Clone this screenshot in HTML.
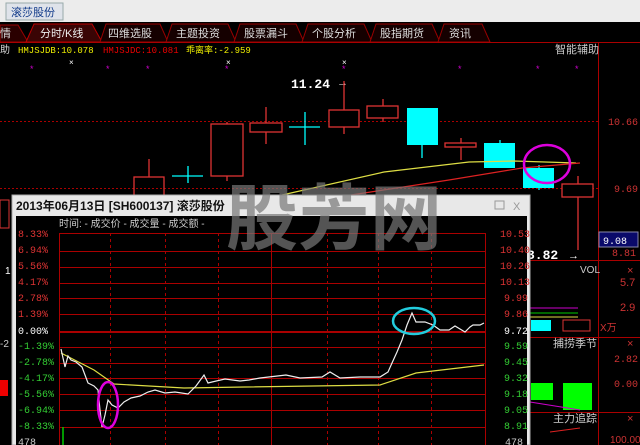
<!DOCTYPE html>
<html><head><meta charset="utf-8"><style>
body{margin:0;width:640px;height:445px;overflow:hidden;background:#000;font-family:"Liberation Sans","Noto Sans CJK SC",sans-serif}
svg{display:block}
</style></head><body>
<svg width="640" height="445" viewBox="0 0 640 445" xmlns="http://www.w3.org/2000/svg" font-family="Liberation Sans, Noto Sans CJK SC, sans-serif">
<rect width="640" height="445" fill="#000"/>
<rect width="640" height="22" fill="#ececec"/>
<rect x="6" y="3" width="57" height="17" fill="#dfe3ea" stroke="#9aa" />
<text x="11" y="16" font-size="11" fill="#113a8a">滚莎股份</text>
<g font-size="11" fill="#ddd">
<path d="M0 42 L0 25 L18 25 L28 42Z" fill="#2a0000" stroke="#900"/>
<text x="0" y="37">情</text>
<path d="M26 42 L34 24 L92 24 L102 42Z" fill="#3a0505" stroke="#b00"/>
<text x="40" y="37" fill="#eee">分时/K线</text>
<path d="M100 42 L106 24 L160 24 L168 42Z" fill="#150000" stroke="#900"/><text x="108" y="37">四维选股</text>
<path d="M166 42 L172 24 L228 24 L236 42Z" fill="#150000" stroke="#900"/><text x="176" y="37">主题投资</text>
<path d="M234 42 L240 24 L296 24 L304 42Z" fill="#150000" stroke="#900"/><text x="244" y="37">股票漏斗</text>
<path d="M302 42 L308 24 L364 24 L372 42Z" fill="#150000" stroke="#900"/><text x="312" y="37">个股分析</text>
<path d="M370 42 L376 24 L432 24 L440 42Z" fill="#150000" stroke="#900"/><text x="380" y="37">股指期货</text>
<path d="M438 42 L444 24 L482 24 L490 42Z" fill="#150000" stroke="#900"/><text x="449" y="37">资讯</text>
</g>
<line x1="0" y1="42.5" x2="640" y2="42.5" stroke="#a00"/>
<line x1="598.5" y1="42" x2="598.5" y2="445" stroke="#a00"/>
<g font-size="9" font-family="Liberation Mono, Noto Sans CJK SC, monospace">
<text x="0" y="53" fill="#ddd" font-size="10">助</text>
<text x="18" y="53" fill="#ee0">HMJSJDB:10.078</text>
<text x="103" y="53" fill="#e00">HMJSJDC:10.081</text>
<text x="186" y="53" fill="#ee0">乖离率:-2.959</text>
<text x="555" y="53" fill="#ccc" font-family="Liberation Sans, Noto Sans CJK SC, sans-serif" font-size="11">智能辅助</text>
</g>
<g fill="#c0c" font-size="9">
<text x="30" y="72">*</text><text x="106" y="72">*</text><text x="146" y="72">*</text><text x="225" y="72">*</text><text x="342" y="72">*</text><text x="458" y="72">*</text><text x="536" y="72">*</text><text x="575" y="72">*</text>
</g>
<g fill="#fff" font-size="8"><text x="69" y="65">×</text><text x="226" y="65">×</text><text x="342" y="65">×</text></g>
<text x="291" y="88" fill="#fff" font-size="13" font-weight="bold" font-family="Liberation Mono, monospace">11.24</text>
<text x="337" y="86" fill="#fff" font-size="11">→</text>
<line x1="0" y1="121.5" x2="598" y2="121.5" stroke="#a00" stroke-dasharray="2,2"/>
<text x="608" y="125" fill="#c33" font-size="10" font-family="Liberation Mono, monospace">10.66</text>
<text x="614" y="192" fill="#c33" font-size="10" font-family="Liberation Mono, monospace">9.69</text>
<line x1="0" y1="188.5" x2="598" y2="188.5" stroke="#a00" stroke-dasharray="2,2"/>
<g stroke="#d33" fill="none" stroke-width="1.3">
<line x1="149" y1="159" x2="149" y2="177"/><rect x="134" y="177" width="30" height="30"/>
<line x1="227" y1="122" x2="227" y2="181"/><rect x="211" y="124" width="32" height="52" fill="#000"/>
<line x1="266" y1="107" x2="266" y2="144"/><rect x="250" y="123" width="32" height="9" fill="#000"/>
<line x1="344" y1="81" x2="344" y2="134"/><rect x="329" y="110" width="30" height="17" fill="#000"/>
<line x1="383" y1="99" x2="383" y2="122"/><rect x="367" y="106" width="31" height="12" fill="#000"/>
<line x1="461" y1="138" x2="461" y2="160"/><rect x="445" y="143" width="31" height="4" fill="#000"/>
<line x1="578" y1="176" x2="578" y2="250"/><rect x="562" y="184" width="31" height="13" fill="#000"/>
</g>
<g stroke="#0ff" stroke-width="1.3">
<line x1="172" y1="176" x2="203" y2="176"/><line x1="188" y1="166" x2="188" y2="183"/>
<line x1="289" y1="127" x2="320" y2="127"/><line x1="305" y1="112" x2="305" y2="145"/>
<line x1="422" y1="145" x2="422" y2="158"/><line x1="500" y1="140" x2="500" y2="143"/><line x1="539" y1="165" x2="539" y2="190"/>
</g>
<rect x="407" y="108" width="31" height="37" fill="#0ff"/>
<rect x="484" y="143" width="31" height="25" fill="#0ff"/>
<rect x="523" y="168" width="31" height="20" fill="#0ff"/>
<polyline points="282,195 384,172 469,162 514,161 576,163" fill="none" stroke="#dd4" stroke-width="1.2"/>
<polyline points="351,195 449,180 522,168 580,163" fill="none" stroke="#d22" stroke-width="1.2"/>
<ellipse cx="547" cy="164" rx="23" ry="19" fill="none" stroke="#d0d" stroke-width="2.5"/>
<rect x="599" y="232" width="39" height="15" fill="#0a0a6a" stroke="#88a"/>
<text x="603" y="244" fill="#fff" font-size="10" font-family="Liberation Mono, monospace">9.08</text>
<text x="612" y="256" fill="#c33" font-size="10" font-family="Liberation Mono, monospace">8.81</text>
<line x1="530" y1="260.5" x2="640" y2="260.5" stroke="#a00"/>
<text x="527" y="259" fill="#fff" font-size="13" font-weight="bold" font-family="Liberation Mono, monospace">3.82</text>
<text x="568" y="259" fill="#fff" font-size="11">→</text>
<text x="580" y="273" fill="#ccc" font-size="10">VOL</text>
<text x="627" y="274" fill="#c33" font-size="11">×</text>
<text x="620" y="286" fill="#c33" font-size="11">5.7</text>
<text x="620" y="311" fill="#c33" font-size="11">2.9</text>
<line x1="530" y1="308" x2="578" y2="308" stroke="#c0c"/><line x1="530" y1="313" x2="578" y2="313" stroke="#0c0"/><line x1="530" y1="317" x2="578" y2="317" stroke="#dd4"/>
<rect x="531" y="320" width="20" height="11" fill="#0ff"/>
<rect x="563" y="320" width="27" height="11" fill="none" stroke="#d33"/>
<text x="600" y="331" fill="#c33" font-size="10">X万</text>
<line x1="530" y1="337.5" x2="640" y2="337.5" stroke="#a00"/>
<text x="553" y="347" fill="#ccc" font-size="11">捕捞季节</text>
<text x="627" y="347" fill="#c33" font-size="11">×</text>
<text x="614" y="362" fill="#c33" font-size="10" font-family="Liberation Mono, monospace">2.82</text>
<text x="614" y="387" fill="#c33" font-size="10" font-family="Liberation Mono, monospace">0.00</text>
<rect x="531" y="383" width="22" height="17" fill="#0f0"/>
<rect x="563" y="383" width="29" height="27" fill="#0f0"/>
<line x1="530" y1="402" x2="580" y2="410" stroke="#c0c"/>
<line x1="530" y1="412.5" x2="640" y2="412.5" stroke="#a00"/>
<text x="553" y="422" fill="#ccc" font-size="11">主力追踪</text>
<text x="627" y="422" fill="#c33" font-size="11">×</text>
<line x1="550" y1="432" x2="580" y2="428" stroke="#d22"/>
<text x="610" y="443" fill="#c33" font-size="10">100.00</text>
<rect x="0" y="200" width="9" height="28" fill="none" stroke="#d33"/>
<text x="5" y="274" fill="#fff" font-size="10">1</text>
<text x="0" y="347" fill="#ccc" font-size="10">-2</text>
<rect x="0" y="380" width="8" height="16" fill="#e00"/>
<rect x="12" y="195" width="518" height="250" fill="#e8e8e8" stroke="#aaa"/>
<text x="16" y="210" fill="#111" font-size="12" font-weight="bold">2013年06月13日 [SH600137] 滚莎股份</text>
<rect x="495" y="201" width="9" height="8" fill="none" stroke="#999"/>
<text x="513" y="210" fill="#999" font-size="11">X</text>
<rect x="16" y="216" width="511" height="229" fill="#000"/>
<text x="59" y="227" fill="#ccc" font-size="10">时间: - 成交价 -  成交量 -  成交额 -</text>
<g stroke="#a00" stroke-width="1">
<line x1="59" y1="233.5" x2="485" y2="233.5"/><line x1="59" y1="251.5" x2="485" y2="251.5"/><line x1="59" y1="267.5" x2="485" y2="267.5"/><line x1="59" y1="283.5" x2="485" y2="283.5"/><line x1="59" y1="298.5" x2="485" y2="298.5"/><line x1="59" y1="314.5" x2="485" y2="314.5"/>
<line x1="59" y1="332" x2="485" y2="332" stroke-width="2"/>
<line x1="59" y1="347.5" x2="485" y2="347.5"/><line x1="59" y1="363.5" x2="485" y2="363.5"/><line x1="59" y1="378.5" x2="485" y2="378.5"/><line x1="59" y1="394.5" x2="485" y2="394.5"/><line x1="59" y1="410.5" x2="485" y2="410.5"/><line x1="59" y1="427.5" x2="485" y2="427.5"/>
<line x1="59.5" y1="233" x2="59.5" y2="445"/><line x1="271.5" y1="233" x2="271.5" y2="445"/><line x1="485.5" y1="233" x2="485.5" y2="445"/>
<g stroke-dasharray="3,3"><line x1="110.5" y1="233" x2="110.5" y2="445"/><line x1="165.5" y1="233" x2="165.5" y2="445"/><line x1="218.5" y1="233" x2="218.5" y2="445"/><line x1="327.5" y1="233" x2="327.5" y2="445"/><line x1="378.5" y1="233" x2="378.5" y2="445"/><line x1="431.5" y1="233" x2="431.5" y2="445"/></g>
</g>
<g font-size="10" font-family="Liberation Mono, monospace">
<g fill="#d33"><text x="18" y="237">8.33%</text><text x="18" y="253">6.94%</text><text x="18" y="269">5.56%</text><text x="18" y="285">4.17%</text><text x="18" y="301">2.78%</text><text x="18" y="317">1.39%</text>
<text x="500" y="237">10.53</text><text x="500" y="253">10.40</text><text x="500" y="269">10.26</text><text x="500" y="285">10.13</text><text x="504" y="301">9.99</text><text x="504" y="317">9.86</text></g>
<text x="18" y="334" fill="#fff">0.00%</text><text x="504" y="334" fill="#fff">9.72</text>
<g fill="#3c3"><text x="18" y="349">-1.39%</text><text x="18" y="365">-2.78%</text><text x="18" y="381">-4.17%</text><text x="18" y="397">-5.56%</text><text x="18" y="413">-6.94%</text><text x="18" y="429">-8.33%</text>
<text x="504" y="349">9.59</text><text x="504" y="365">9.45</text><text x="504" y="381">9.32</text><text x="504" y="397">9.18</text><text x="504" y="413">9.05</text><text x="504" y="429">8.91</text></g>
<text x="18" y="445" fill="#ccc">478</text><text x="505" y="445" fill="#ccc">478</text>
</g>
<line x1="63" y1="427" x2="63" y2="445" stroke="#0c0" stroke-width="1.5"/>
<polyline points="61,353 94,370 114,384 184,388 245,387 380,385 416,373 484,365" fill="none" stroke="#dd4" stroke-width="1.2"/>
<polyline points="61,349 65,367 68,356 71,360 76,362 82,367 88,383 94,386 98,390 100,410 102,427 105,415 108,400 112,405 118,408 124,402 131,398 140,396 148,392 155,390 165,393 175,392 188,394 196,386 204,375 208,383 212,382 225,379 240,381 249,380 260,378 286,375 300,378 322,377 330,372 340,378 360,377 380,377 388,372 392,363 397,352 402,340 407,325 412,313 416,322 425,322 433,325 440,330 449,330 455,326 465,332 470,327 473,325 480,325 484,323" fill="none" stroke="#eee" stroke-width="1.2"/>
<ellipse cx="108" cy="405" rx="10" ry="23" fill="none" stroke="#d0d" stroke-width="2.5"/>
<ellipse cx="414" cy="321" rx="21" ry="13" fill="none" stroke="#2cd" stroke-width="2.5"/>
<text x="226" y="244" fill="#777" fill-opacity="0.7" font-size="72" font-weight="bold" font-family="Noto Sans CJK SC, sans-serif">股芳网</text>
</svg>
</body></html>
